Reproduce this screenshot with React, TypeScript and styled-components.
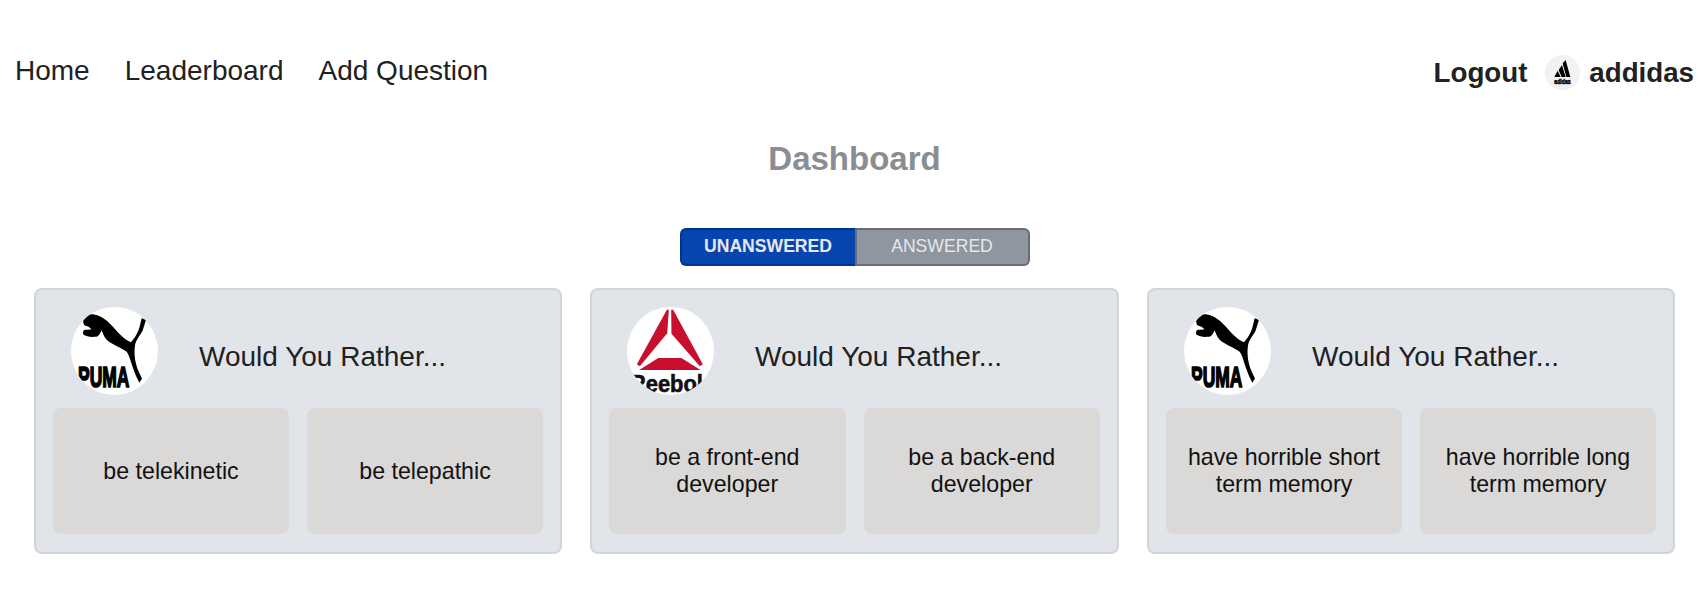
import React, { FC } from "react";
import styled, { createGlobalStyle } from "styled-components";

const GlobalStyle = createGlobalStyle`
  html, body {
    margin: 0;
    padding: 0;
    background: #fff;
    font-family: "Liberation Sans", Arial, sans-serif;
    color: #212121;
  }
`;

const Header = styled.header`
  display: flex;
  justify-content: space-between;
  align-items: flex-start;
  padding: 55px 5px 0 15px;
`;

const Nav = styled.nav`
  display: flex;
  gap: 35px;
`;

const NavLink = styled.a`
  font-size: 28px;
  color: #212121;
  text-decoration: none;
`;

const UserArea = styled.div`
  display: flex;
  align-items: center;
  font-size: 27.7px;
  font-weight: 700;
  color: #212121;
`;

const UserAvatar = styled.div`
  width: 35px;
  height: 35px;
  margin: 0 9px 0 18px;
  border-radius: 50%;
  overflow: hidden;
  background: #f2f2f2;

  svg {
    display: block;
    width: 100%;
    height: 100%;
  }
`;

const Main = styled.main`
  padding: 50px 24px 0 34px;
`;

const Title = styled.h1`
  margin: 0 0 51px;
  font-size: 33px;
  line-height: 37px;
  font-weight: 700;
  text-align: center;
  color: #8a8d91;
`;

const Toggle = styled.div`
  display: flex;
  justify-content: center;
  margin-bottom: 22px;
`;

const ToggleButton = styled.button<{ $active?: boolean }>`
  box-sizing: border-box;
  width: 175px;
  height: 38px;
  padding: 0 0 2px;
  font-family: inherit;
  font-size: 17.6px;
  font-weight: ${p => (p.$active ? 700 : 400)};
  color: #e6e8ee;
  background: ${p => (p.$active ? "#0645ad" : "#8f969f")};
  border: 2px solid ${p => (p.$active ? "#03348a" : "#676d78")};
  border-radius: ${p => (p.$active ? "6px 0 0 6px" : "0 6px 6px 0")};
  ${p => (p.$active ? "border-right: 0;" : "")}
`;

const Cards = styled.div`
  display: grid;
  grid-template-columns: 528px 529px 528px;
  column-gap: 28px;
`;

const Card = styled.section`
  box-sizing: border-box;
  height: 266px;
  padding: 17px;
  background: #e1e4e9;
  border: 2px solid #d2d4d7;
  border-radius: 8px;
`;

const CardHeader = styled.div`
  display: flex;
  align-items: center;
  height: 88px;
  padding-left: 18px;
  margin-bottom: 13px;
`;

const Avatar = styled.div`
  width: 87px;
  height: 88px;
  margin-right: 41px;
  border-radius: 50%;
  overflow: hidden;
  background: #fff;

  svg {
    display: block;
    width: 100%;
    height: 100%;
  }
`;

const CardTitle = styled.h2`
  margin: 12px 0 0;
  font-size: 28px;
  font-weight: 400;
  color: #212121;
`;

const Options = styled.div`
  display: grid;
  grid-template-columns: 1fr 1fr;
  column-gap: 18px;
`;

const Option = styled.div`
  display: flex;
  align-items: center;
  justify-content: center;
  box-sizing: border-box;
  height: 126px;
  padding: 0 16px;
  text-align: center;
  font-size: 23.2px;
  color: #111;
  background: #dad9d8;
  border-radius: 8px;
`;

const PumaLogo: FC = () => (
  <svg viewBox="63 37 261 261">
    <path
      d="M100 74 C106 62 118 56 132 58 C150 60 170 74 186 92 C202 110 222 134 243 141 C254 130 264 112 268 98 L275 69 L288 74 L278 106 C270 122 258 134 255 150 C252 168 254 190 258 206 C262 224 270 238 276 250 L268 263 C260 248 252 228 244 204 C240 190 236 178 230 170 C214 158 188 150 170 134 C162 124 158 114 155 105 C150 116 145 125 135 125 C120 126 108 124 100 118 C98 110 100 104 108 104 L124 103 C120 96 112 92 103 90 C100 86 99 80 100 74 Z"
      fill="#000"
    />
    <text
      x="84"
      y="276"
      fontFamily="Liberation Sans, Arial, sans-serif"
      fontWeight="700"
      fontSize="86"
      textLength="154"
      lengthAdjust="spacingAndGlyphs"
      fill="#000"
      stroke="#000"
      strokeWidth="5"
    >
      PUMA
    </text>
  </svg>
);

const ReebokLogo: FC = () => (
  <svg viewBox="141 50 264 264">
    <path d="M262 57 L268 57 L263 128 L180 228 L171 222 Z" fill="#c8102e" />
    <path d="M275 57 L281 57 L371 222 L362 228 L276 130 Z" fill="#c8102e" />
    <path d="M236 203 L306 203 L364 240 L178 240 Z" fill="#c8102e" />
    <text
      x="150"
      y="306"
      fontFamily="Liberation Sans, Arial, sans-serif"
      fontWeight="700"
      fontSize="72"
      textLength="240"
      lengthAdjust="spacingAndGlyphs"
      fill="#111"
      stroke="#111"
      strokeWidth="2"
    >
      Reebok
    </text>
  </svg>
);

const AdidasLogo: FC = () => (
  <svg viewBox="435 45 105 105">
    <path d="M463 111 L473 92 L482 111 Z" fill="#000" />
    <path d="M476 90 L486 75 L497 111 L485 111 Z" fill="#000" />
    <path d="M488 70 L497 60 L511 111 L499 111 Z" fill="#000" />
    <text
      x="463"
      y="133"
      fontFamily="Liberation Sans, Arial, sans-serif"
      fontWeight="700"
      fontSize="20"
      textLength="49"
      lengthAdjust="spacingAndGlyphs"
      fill="#000"
      stroke="#000"
      strokeWidth="1.5"
    >
      adidas
    </text>
  </svg>
);

type Question = {
  id: string;
  logo: FC;
  optionOne: string;
  optionTwo: string;
};

const questions: Question[] = [
  { id: "q1", logo: PumaLogo, optionOne: "be telekinetic", optionTwo: "be telepathic" },
  { id: "q2", logo: ReebokLogo, optionOne: "be a front-end developer", optionTwo: "be a back-end developer" },
  { id: "q3", logo: PumaLogo, optionOne: "have horrible short term memory", optionTwo: "have horrible long term memory" }
];

const App: FC = () => (
  <>
    <GlobalStyle />
    <Header>
      <Nav>
        <NavLink href="#">Home</NavLink>
        <NavLink href="#">Leaderboard</NavLink>
        <NavLink href="#">Add Question</NavLink>
      </Nav>
      <UserArea>
        <span>Logout</span>
        <UserAvatar>
          <AdidasLogo />
        </UserAvatar>
        <span>addidas</span>
      </UserArea>
    </Header>
    <Main>
      <Title>Dashboard</Title>
      <Toggle>
        <ToggleButton $active>UNANSWERED</ToggleButton>
        <ToggleButton>ANSWERED</ToggleButton>
      </Toggle>
      <Cards>
        {questions.map(({ id, logo: Logo, optionOne, optionTwo }) => (
          <Card key={id}>
            <CardHeader>
              <Avatar>
                <Logo />
              </Avatar>
              <CardTitle>Would You Rather...</CardTitle>
            </CardHeader>
            <Options>
              <Option>{optionOne}</Option>
              <Option>{optionTwo}</Option>
            </Options>
          </Card>
        ))}
      </Cards>
    </Main>
  </>
);

export default App;
